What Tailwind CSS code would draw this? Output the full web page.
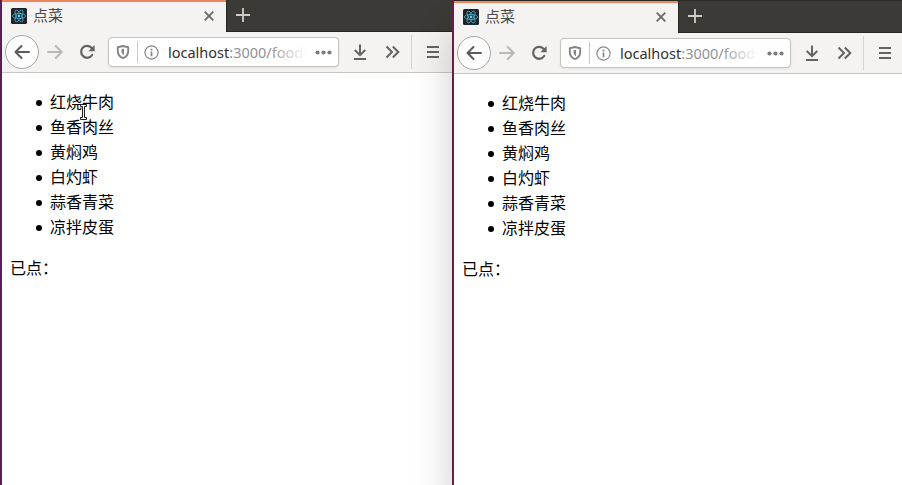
<!DOCTYPE html>
<html lang="zh-CN">
<head>
<meta charset="utf-8">
<title>点菜</title>
<script src="https://cdn.jsdelivr.net/npm/@tailwindcss/browser@4"></script>
</head>
<body class="w-[902px] h-[485px] overflow-hidden bg-white">
<div id="desktop" class="relative flex h-[485px] bg-[#2b2926] font-['Noto_Sans_CJK_SC',sans-serif]"></div>

<!-- Text cursor over the first window -->
<svg class="absolute left-[78px] top-[104px] z-20" width="10" height="17" viewBox="0 0 10 17" fill="none">
  <path d="M2 1H8V3H6V14H8V16H2V14H4V3H2Z" fill="#fff" stroke="#1c1c1c" stroke-width="1" transform="translate(.5 -.5)"/>
</svg>

<template id="browser">
  <section class="flex flex-col flex-1 min-w-0 bg-white overflow-hidden">
    <div class="flex h-8 shrink-0 bg-[#3c3a36] border-b border-[#262522]">
      <div class="flex items-center w-[224px] h-8 bg-[#f4f3f1] border-t-2 border-[#f0845c] pl-[9px] pr-[12px] shrink-0">
        <svg width="16" height="16" viewBox="0 0 16 16" fill="none" class="-mt-[2px]">
          <rect width="16" height="16" rx="1.5" fill="#20232a"/>
          <g stroke="#48a9c5" stroke-width=".85">
            <ellipse cx="8" cy="8" rx="6.6" ry="2.6"/>
            <ellipse cx="8" cy="8" rx="6.6" ry="2.6" transform="rotate(60 8 8)"/>
            <ellipse cx="8" cy="8" rx="6.6" ry="2.6" transform="rotate(120 8 8)"/>
          </g>
          <circle cx="8" cy="8" r="1.4" fill="#61c9e8"/>
        </svg>
        <span class="ml-[6px] -mt-[4px] text-[15px] leading-5 text-[#4a4a4a]">点菜</span>
        <svg class="ml-auto -mt-[2px]" width="10" height="10" viewBox="0 0 10 10" stroke="#696969" stroke-width="1.8"><path d="M.7 .7L9.3 9.3M9.3 .7L.7 9.3"/></svg>
      </div>
      <div class="w-px h-full bg-[#262522]"></div>
      <svg class="ml-[9px] mt-[8px]" width="14" height="14" viewBox="0 0 14 14" stroke="#d0cdc7" stroke-width="1.8"><path d="M7 0V14M0 7H14"/></svg>
    </div>
    <div class="flex items-center h-[41px] shrink-0 bg-[#f4f3f1] border-b border-[#c9c7c5] pl-[3px]">
      <div class="flex items-center justify-center size-[34px] rounded-full border border-[#a9a8a7] bg-[#fdfdfd] shrink-0">
        <svg width="16" height="16" viewBox="0 0 16 16" fill="none" stroke="#5a5a5a" stroke-width="2" stroke-linecap="round" stroke-linejoin="round"><path d="M15 8H1.5M7.5 2L1.5 8L7.5 14"/></svg>
      </div>
      <svg class="ml-[8px] shrink-0" width="16" height="16" viewBox="0 0 16 16" fill="none" stroke="#b9b8b7" stroke-width="2" stroke-linecap="round" stroke-linejoin="round"><path d="M1 8H14.5M8.7 2L14.7 8L8.7 14"/></svg>
      <svg class="ml-[16px] shrink-0" width="16" height="16" viewBox="0 0 16 16" fill="none"><path d="M12.8 4A6 6 0 1 0 13.2 11" stroke="#636363" stroke-width="2.2" stroke-linecap="round"/><path d="M15.6 1V7.2H9.4Z" fill="#636363"/></svg>
      <div class="flex items-center ml-[13px] w-[231px] h-[30px] shrink-0 rounded-[4px] border border-[#c6c2be] bg-white shadow-[0_1px_3px_rgba(0,0,0,0.07)]">
        <svg class="ml-[7px] shrink-0" width="14" height="14" viewBox="0 0 14 14" fill="none"><path d="M7 1L12.2 2.2V6C12.2 9.5 10 12 7 13.1C4 12 1.8 9.5 1.8 6V2.2Z" stroke="#858585" stroke-width="1.9" stroke-linejoin="round"/><path d="M7 3.8V10.2C5.3 9.2 4.5 7.8 4.5 6V4.3Z" fill="#858585" transform="translate(1 0)"/></svg>
        <div class="ml-[7px] w-px h-[22px] bg-[#c9c9c9]"></div>
        <svg class="ml-[6px] shrink-0" width="15" height="15" viewBox="0 0 15 15" fill="none"><circle cx="7.5" cy="7.5" r="6.6" stroke="#858585" stroke-width="1.2"/><path d="M7.5 6.5V11.2M7.5 3.7V5.4" stroke="#858585" stroke-width="1.7"/></svg>
        <div class="relative ml-[9px] w-[138px] overflow-hidden whitespace-nowrap font-['Noto_Sans',sans-serif] text-[14.5px] leading-6 text-[#929292]"><span class="text-[#303030]">localhost</span>:3000/foods<span class="absolute right-0 top-0 h-full w-[36px] bg-linear-to-r from-white/0 to-white"></span></div>
        <svg class="ml-[9px] shrink-0" width="17" height="5" viewBox="0 0 17 5" fill="#7c7c7c"><circle cx="2.5" cy="2.5" r="2.1"/><circle cx="8.5" cy="2.5" r="2.1"/><circle cx="14.5" cy="2.5" r="2.1"/></svg>
      </div>
      <svg class="ml-[13px] shrink-0" width="16" height="16" viewBox="0 0 16 16" fill="none" stroke="#636363" stroke-width="2"><path d="M8 .5V11M2.7 6L8 11.2L13.3 6M2 15H14"/></svg>
      <svg class="ml-[16px] shrink-0" width="16" height="16" viewBox="0 0 16 16" fill="none" stroke="#636363" stroke-width="2"><path d="M2.5 2.5L8 8L2.5 13.5M8.8 2.5L14.3 8L8.8 13.5"/></svg>
      <div class="ml-[11px] w-px h-[34px] bg-[#d5d3d1] shrink-0"></div>
      <svg class="ml-[13px] shrink-0" width="16" height="16" viewBox="0 0 16 16" stroke="#636363" stroke-width="2"><path d="M2 3H14M2 8H14M2 13H14"/></svg>
    </div>
    <main class="px-2 pt-4 text-base leading-[25px] text-black">
      <ul class="pl-10 mb-4 [&>li]:relative [&>li]:before:absolute [&>li]:before:-left-[14px] [&>li]:before:top-[11px] [&>li]:before:size-[6px] [&>li]:before:rounded-full [&>li]:before:bg-black [&>li]:before:content-['']">
        <li>红烧牛肉</li>
        <li>鱼香肉丝</li>
        <li>黄焖鸡</li>
        <li>白灼虾</li>
        <li>蒜香青菜</li>
        <li>凉拌皮蛋</li>
      </ul>
      <p>已点：</p>
    </main>
  </section>
</template>

<script>
  const frames = [
    'flex w-[452px] shrink-0 border-l-2 border-[#5b1d55]',
    'flex w-[450px] shrink-0 border-l-2 border-[#652043] pt-px shadow-[0_30px_36px_rgba(0,0,0,0.2)] z-10 bg-[#2b2926]'
  ];
  for (const cls of frames) {
    const frame = document.createElement('div');
    frame.className = cls;
    frame.append(document.getElementById('browser').content.cloneNode(true));
    document.getElementById('desktop').append(frame);
  }
</script>
</body>
</html>
